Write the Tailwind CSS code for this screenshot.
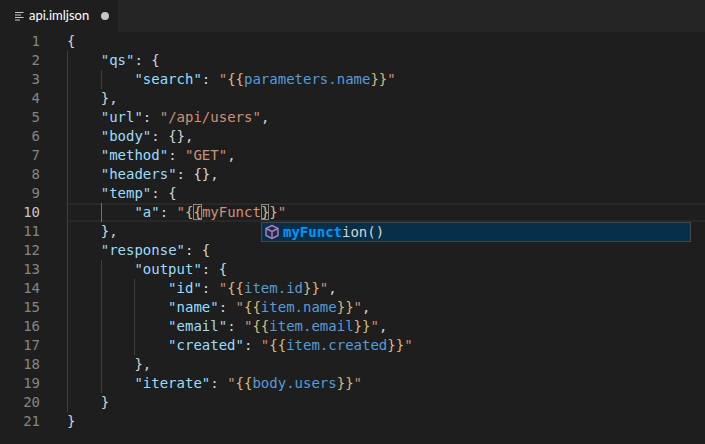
<!DOCTYPE html>
<html lang="en">
<head>
<meta charset="UTF-8">
<title>api.imljson</title>
<script src="https://cdn.jsdelivr.net/npm/@tailwindcss/browser@4"></script>
</head>
<body class="bg-[#1e1e1e] w-[705px] h-[444px] overflow-hidden">
<!-- Tab bar -->
<div class="flex h-8 bg-[#252526]">
  <div class="flex items-center w-[118px] bg-[#1e1e1e] pl-[15px]">
    <svg class="w-[9px] h-[9px] mr-[5px]" viewBox="0 0 9 9" fill="none" stroke="#c5c5c5" stroke-width="1"><path d="M0 0.5H8.5M0 3H6M0 5.5H8.5M0 8H5"/></svg>
    <span class="font-['Lato'] text-[13px] text-white w-[72px]">api.imljson</span>
    <span class="w-2 h-2 rounded-full bg-[#c5c5c5]"></span>
  </div>
</div>
<!-- Editor -->
<div class="relative font-['DejaVu_Sans_Mono'] text-[14px] leading-[19px] whitespace-nowrap text-[#d4d4d4]">
  <div class="flex h-[19px]"><div class="w-[40px] text-right text-[#858585]">1</div><div class="ml-[27px] flex-1 flex"><span>{</span></div></div>
  <div class="flex h-[19px]"><div class="w-[40px] text-right text-[#858585]">2</div><div class="ml-[27px] flex-1 flex"><span class="w-[4ch] border-l border-[#404040]"></span><span><span class="text-[#9cdcfe]">"qs"</span>: {</span></div></div>
  <div class="flex h-[19px]"><div class="w-[40px] text-right text-[#858585]">3</div><div class="ml-[27px] flex-1 flex"><span class="w-[4ch] border-l border-[#404040]"></span><span class="w-[4ch] border-l border-[#404040]"></span><span><span class="text-[#9cdcfe]">"search"</span>: <span class="text-[#ce9178]">"</span><span class="text-[#d7ba7d]">{{</span><span class="text-[#569cd6]">parameters.name</span><span class="text-[#d7ba7d]">}}</span><span class="text-[#ce9178]">"</span></span></div></div>
  <div class="flex h-[19px]"><div class="w-[40px] text-right text-[#858585]">4</div><div class="ml-[27px] flex-1 flex"><span class="w-[4ch] border-l border-[#404040]"></span><span>},</span></div></div>
  <div class="flex h-[19px]"><div class="w-[40px] text-right text-[#858585]">5</div><div class="ml-[27px] flex-1 flex"><span class="w-[4ch] border-l border-[#404040]"></span><span><span class="text-[#9cdcfe]">"url"</span>: <span class="text-[#ce9178]">"/api/users"</span>,</span></div></div>
  <div class="flex h-[19px]"><div class="w-[40px] text-right text-[#858585]">6</div><div class="ml-[27px] flex-1 flex"><span class="w-[4ch] border-l border-[#404040]"></span><span><span class="text-[#9cdcfe]">"body"</span>: {},</span></div></div>
  <div class="flex h-[19px]"><div class="w-[40px] text-right text-[#858585]">7</div><div class="ml-[27px] flex-1 flex"><span class="w-[4ch] border-l border-[#404040]"></span><span><span class="text-[#9cdcfe]">"method"</span>: <span class="text-[#ce9178]">"GET"</span>,</span></div></div>
  <div class="flex h-[19px]"><div class="w-[40px] text-right text-[#858585]">8</div><div class="ml-[27px] flex-1 flex"><span class="w-[4ch] border-l border-[#404040]"></span><span><span class="text-[#9cdcfe]">"headers"</span>: {},</span></div></div>
  <div class="flex h-[19px]"><div class="w-[40px] text-right text-[#858585]">9</div><div class="ml-[27px] flex-1 flex"><span class="w-[4ch] border-l border-[#404040]"></span><span><span class="text-[#9cdcfe]">"temp"</span>: {</span></div></div>
  <div class="flex h-[19px]"><div class="w-[40px] text-right text-[#c6c6c6]">10</div><div class="ml-[27px] flex-1 flex shadow-[inset_0_2px_0_#282828,inset_0_-2px_0_#282828]"><span class="w-[4ch] border-l border-[#404040]"></span><span class="w-[4ch] border-l border-[#707070]"></span><span><span class="text-[#9cdcfe]">"a"</span>: <span class="text-[#ce9178]">"</span><span class="text-[#d7ba7d]">{</span><span class="text-[#d7ba7d] outline outline-1 -outline-offset-1 outline-[#888888]">{</span><span class="text-[#ce9178]">myFunct</span><span class="text-[#d7ba7d] outline outline-1 -outline-offset-1 outline-[#888888]">}</span><span class="text-[#d7ba7d]">}</span><span class="text-[#ce9178]">"</span></span></div></div>
  <div class="flex h-[19px]"><div class="w-[40px] text-right text-[#858585]">11</div><div class="ml-[27px] flex-1 flex"><span class="w-[4ch] border-l border-[#404040]"></span><span>},</span></div></div>
  <div class="flex h-[19px]"><div class="w-[40px] text-right text-[#858585]">12</div><div class="ml-[27px] flex-1 flex"><span class="w-[4ch] border-l border-[#404040]"></span><span><span class="text-[#9cdcfe]">"response"</span>: {</span></div></div>
  <div class="flex h-[19px]"><div class="w-[40px] text-right text-[#858585]">13</div><div class="ml-[27px] flex-1 flex"><span class="w-[4ch] border-l border-[#404040]"></span><span class="w-[4ch] border-l border-[#404040]"></span><span><span class="text-[#9cdcfe]">"output"</span>: {</span></div></div>
  <div class="flex h-[19px]"><div class="w-[40px] text-right text-[#858585]">14</div><div class="ml-[27px] flex-1 flex"><span class="w-[4ch] border-l border-[#404040]"></span><span class="w-[4ch] border-l border-[#404040]"></span><span class="w-[4ch] border-l border-[#404040]"></span><span><span class="text-[#9cdcfe]">"id"</span>: <span class="text-[#ce9178]">"</span><span class="text-[#d7ba7d]">{{</span><span class="text-[#569cd6]">item.id</span><span class="text-[#d7ba7d]">}}</span><span class="text-[#ce9178]">"</span>,</span></div></div>
  <div class="flex h-[19px]"><div class="w-[40px] text-right text-[#858585]">15</div><div class="ml-[27px] flex-1 flex"><span class="w-[4ch] border-l border-[#404040]"></span><span class="w-[4ch] border-l border-[#404040]"></span><span class="w-[4ch] border-l border-[#404040]"></span><span><span class="text-[#9cdcfe]">"name"</span>: <span class="text-[#ce9178]">"</span><span class="text-[#d7ba7d]">{{</span><span class="text-[#569cd6]">item.name</span><span class="text-[#d7ba7d]">}}</span><span class="text-[#ce9178]">"</span>,</span></div></div>
  <div class="flex h-[19px]"><div class="w-[40px] text-right text-[#858585]">16</div><div class="ml-[27px] flex-1 flex"><span class="w-[4ch] border-l border-[#404040]"></span><span class="w-[4ch] border-l border-[#404040]"></span><span class="w-[4ch] border-l border-[#404040]"></span><span><span class="text-[#9cdcfe]">"email"</span>: <span class="text-[#ce9178]">"</span><span class="text-[#d7ba7d]">{{</span><span class="text-[#569cd6]">item.email</span><span class="text-[#d7ba7d]">}}</span><span class="text-[#ce9178]">"</span>,</span></div></div>
  <div class="flex h-[19px]"><div class="w-[40px] text-right text-[#858585]">17</div><div class="ml-[27px] flex-1 flex"><span class="w-[4ch] border-l border-[#404040]"></span><span class="w-[4ch] border-l border-[#404040]"></span><span class="w-[4ch] border-l border-[#404040]"></span><span><span class="text-[#9cdcfe]">"created"</span>: <span class="text-[#ce9178]">"</span><span class="text-[#d7ba7d]">{{</span><span class="text-[#569cd6]">item.created</span><span class="text-[#d7ba7d]">}}</span><span class="text-[#ce9178]">"</span></span></div></div>
  <div class="flex h-[19px]"><div class="w-[40px] text-right text-[#858585]">18</div><div class="ml-[27px] flex-1 flex"><span class="w-[4ch] border-l border-[#404040]"></span><span class="w-[4ch] border-l border-[#404040]"></span><span>},</span></div></div>
  <div class="flex h-[19px]"><div class="w-[40px] text-right text-[#858585]">19</div><div class="ml-[27px] flex-1 flex"><span class="w-[4ch] border-l border-[#404040]"></span><span class="w-[4ch] border-l border-[#404040]"></span><span><span class="text-[#9cdcfe]">"iterate"</span>: <span class="text-[#ce9178]">"</span><span class="text-[#d7ba7d]">{{</span><span class="text-[#569cd6]">body.users</span><span class="text-[#d7ba7d]">}}</span><span class="text-[#ce9178]">"</span></span></div></div>
  <div class="flex h-[19px]"><div class="w-[40px] text-right text-[#858585]">20</div><div class="ml-[27px] flex-1 flex"><span class="w-[4ch] border-l border-[#404040]"></span><span>}</span></div></div>
  <div class="flex h-[19px]"><div class="w-[40px] text-right text-[#858585]">21</div><div class="ml-[27px] flex-1 flex"><span>}</span></div></div>

  <!-- Suggest widget -->
  <div class="absolute left-[261px] top-[190px] w-[430px] h-[20px] flex items-center bg-[#062f4a] border border-[#454545]">
    <svg class="w-[16px] h-[16px] ml-[2px] mr-[3px]" viewBox="0 0 16 16" fill="#1f2a44" stroke="#a57cc4" stroke-width="1.5" stroke-linejoin="round"><path d="M8 1.5L14 4.5V11.5L8 14.5L2 11.5V4.5Z"/><path d="M2 4.5L8 7.5L14 4.5M8 7.5V14.5" fill="none"/></svg>
    <span><span class="font-bold text-[#0097fb]">myFunct</span>ion()</span>
  </div>
</div>
</body>
</html>
